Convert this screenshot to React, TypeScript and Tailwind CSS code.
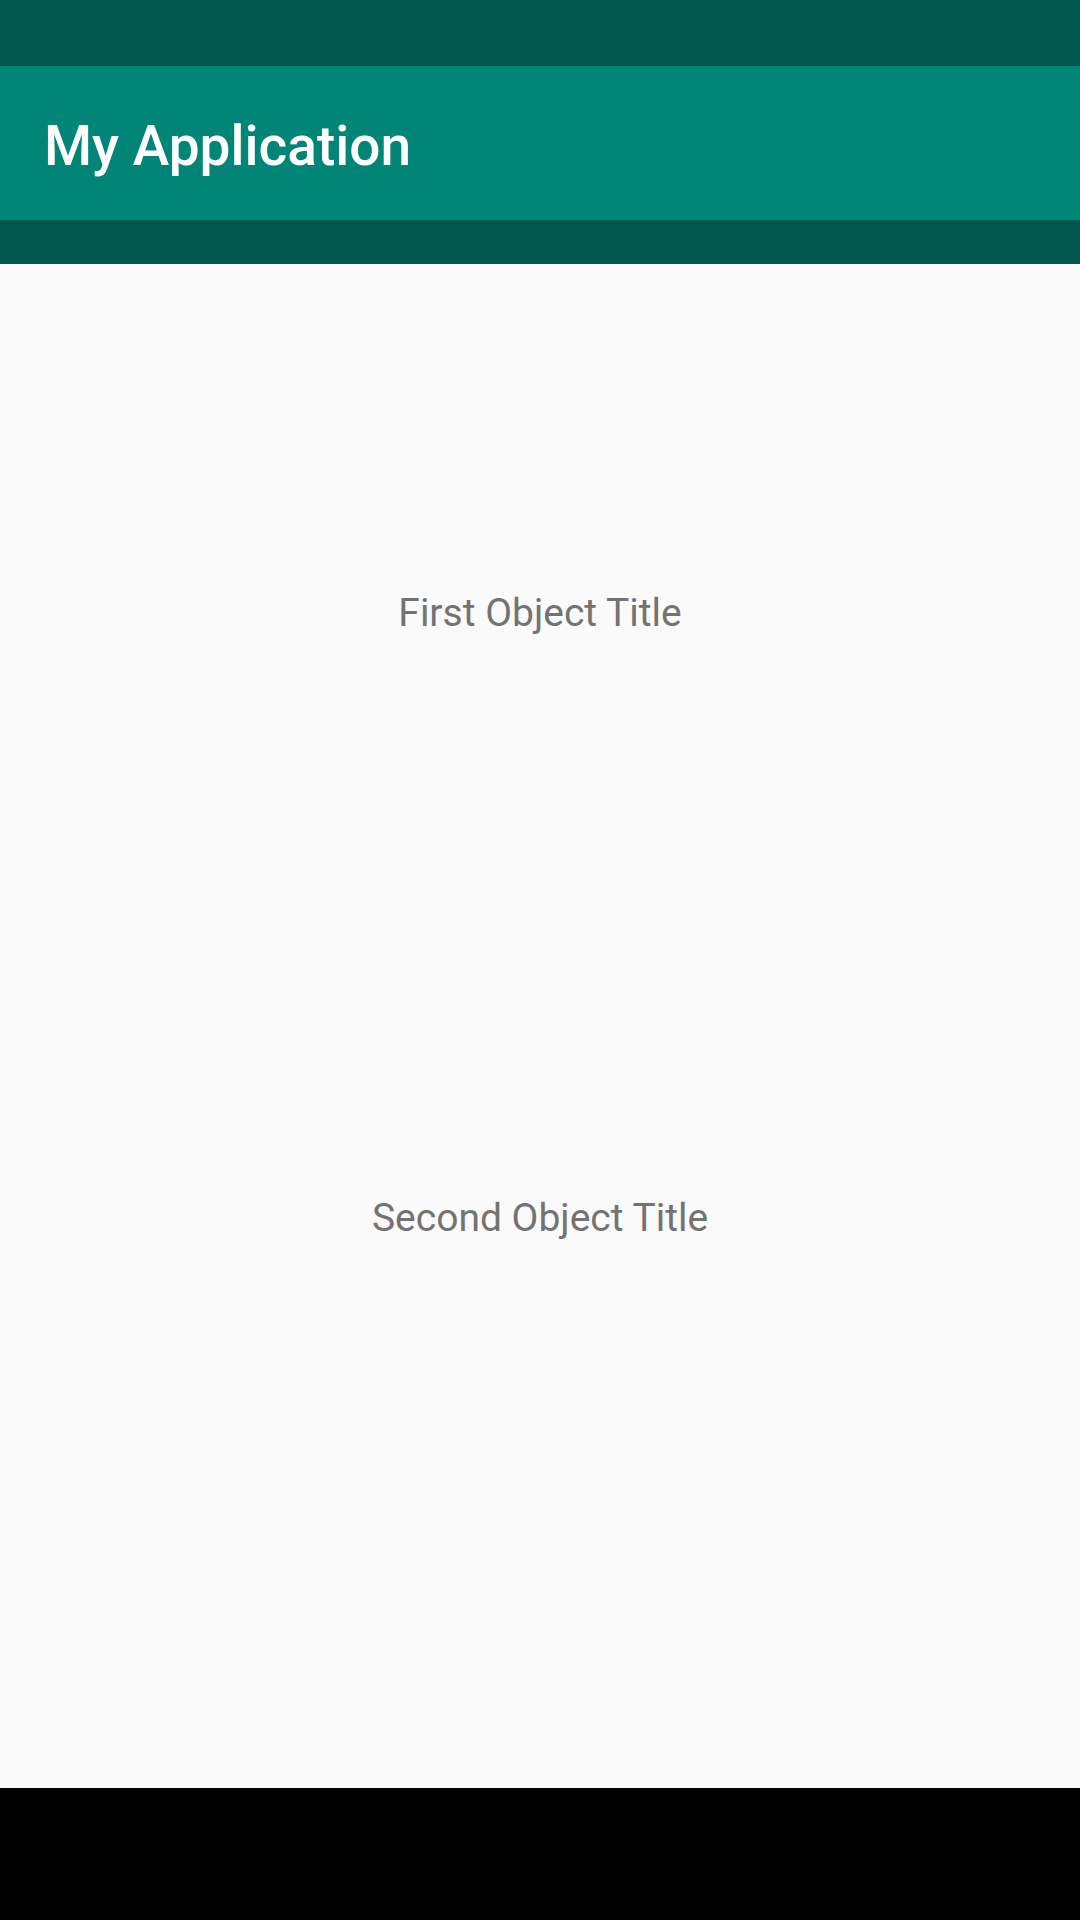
export default function App() {
  return (
    <div
      className="w-[1080px] h-[1920px] flex flex-col bg-[#fafafa] overflow-hidden"
      style={{ fontFamily: "Roboto, 'Noto Sans', sans-serif" }}
    >
      {/* status bar */}
      <div className="h-[66px] shrink-0 bg-[#00574b]" />

      {/* toolbar */}
      <div className="h-[154px] shrink-0 bg-[#008577] px-[44px] pt-[48px]">
        <h1 className="text-[55px] leading-[64px] font-medium text-white">My Application</h1>
      </div>
      <div className="h-[44px] shrink-0 bg-[#00574b]" />

      {/* content */}
      <div className="flex-1 flex flex-col items-center pt-[327px]">
        <p className="text-[39px] leading-[45px] text-[#737373]">First Object Title</p>
        <p className="mt-[560px] text-[39px] leading-[45px] text-[#737373]">Second Object Title</p>
      </div>

      {/* navigation bar */}
      <div className="h-[132px] shrink-0 bg-black" />
    </div>
  );
}
